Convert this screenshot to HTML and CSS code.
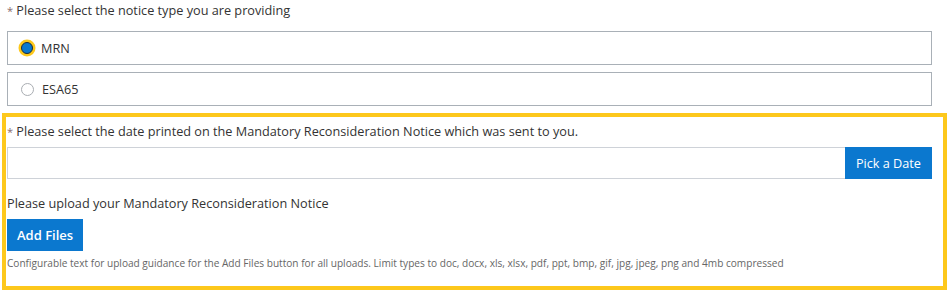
FILE: index.html
```html
<!DOCTYPE html>
<html lang="en">
  <head>
    <meta charset="UTF-8" />
    <meta name="viewport" content="width=device-width, initial-scale=1.0" />
    <title>Notice Details</title>
    <link rel="stylesheet" href="styles.css">
  </head>
  <body>
    <div class="form">
      <!-- Notice type -->
      <fieldset class="question">
        <legend class="label"><span class="req">*</span> Please select the notice type you are providing</legend>
        <label class="radio-box">
          <input type="radio" name="notice" value="MRN" checked />
          <span class="radio focused"></span>
          <span>MRN</span>
        </label>
        <label class="radio-box">
          <input type="radio" name="notice" value="ESA65" />
          <span class="radio"></span>
          <span>ESA65</span>
        </label>
      </fieldset>

      <!-- Highlighted section -->
      <div class="highlight">
        <div class="label"><span class="req">*</span> Please select the date printed on the Mandatory Reconsideration Notice which was sent to you.</div>
        <div class="date-row">
          <input type="text" class="date-input" />
          <button type="button" class="btn">Pick a Date</button>
        </div>

        <div class="label upload-label">Please upload your Mandatory Reconsideration Notice</div>
        <button type="button" class="btn btn-files">Add Files</button>
        <p class="hint">Configurable text for upload guidance for the Add Files button for all uploads. Limit types to doc, docx, xls, xlsx, pdf, ppt, bmp, gif, jpg, jpeg, png and 4mb compressed</p>
      </div>
    </div>
  </body>
</html>
```

FILE: styles.css
```css
:root {
  --blue: #0b78cf;
  --yellow: #fdc81c;
  --text: #333333;
}

body {
  margin: 0;
  font-family: "Open Sans", "Noto Sans", sans-serif;
  font-size: 12.7px;
  color: var(--text);
  background: #fff;
}

.form {
  width: 950px;
}

/* Notice type */
.question {
  border: none;
  margin: 0;
  padding: 3px 18px 0 7px;
}

.label {
  line-height: 20px;
  padding: 0;
}

.req {
  color: #8a6a6a;
  font-size: 11px;
}

.radio-box {
  display: flex;
  align-items: center;
  gap: 8px;
  height: 32px;
  margin-top: 7px;
  padding-left: 13px;
  border: 1px solid #a9b0b7;
  cursor: pointer;
}

.radio-box input {
  display: none;
}

.radio {
  width: 11px;
  height: 11px;
  border: 1px solid #a9adb2;
  border-radius: 50%;
  box-sizing: content-box;
}

.radio.focused {
  width: 10px;
  height: 10px;
  background: var(--blue);
  border: 1.5px solid #1c2a38;
  box-shadow: 0 0 0 2.5px var(--yellow);
}

/* Highlighted section */
.highlight {
  margin: 7px 3px 0 2px;
  border: 4px solid var(--yellow);
  padding: 4px 11px 15px 1px;
}

.date-row {
  display: flex;
  margin-top: 5px;
}

.date-input {
  flex: 1;
  height: 32px;
  box-sizing: border-box;
  border: 1px solid #ced2d8;
  border-right: none;
  margin: 0;
}

.btn {
  background: var(--blue);
  color: #fff;
  border: none;
  font-family: inherit;
  font-size: 12.7px;
  height: 32px;
  padding: 0 11px;
  cursor: pointer;
}

.upload-label {
  margin-top: 14px;
}

.btn-files {
  margin-top: 6px;
  padding: 0 10px;
  font-size: 13px;
  font-weight: 600;
}

.hint {
  margin: 4px 0 0;
  font-size: 10.1px;
  color: #666;
  line-height: 16px;
}
```
